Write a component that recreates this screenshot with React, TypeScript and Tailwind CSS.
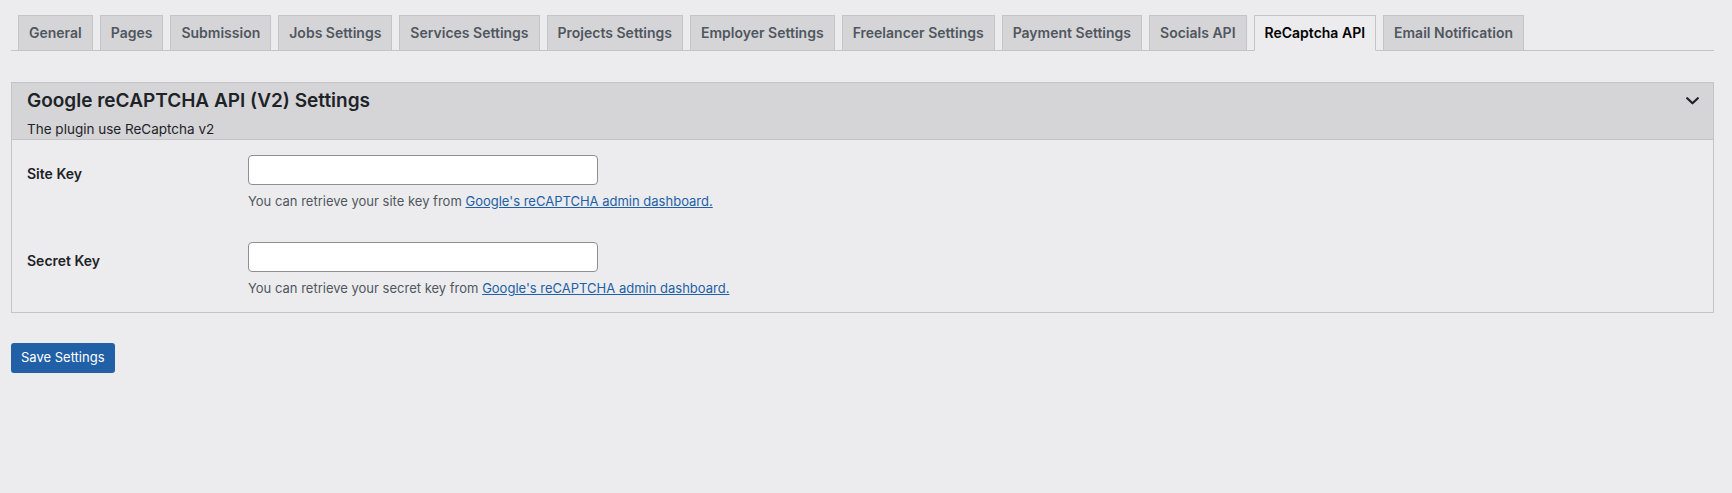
const tabs = [
  "General",
  "Pages",
  "Submission",
  "Jobs Settings",
  "Services Settings",
  "Projects Settings",
  "Employer Settings",
  "Freelancer Settings",
  "Payment Settings",
  "Socials API",
  "ReCaptcha API",
  "Email Notification",
];

const active = "ReCaptcha API";

function KeyRow({ label, what, last }: { label: string; what: string; last?: boolean }) {
  return (
    <div className={`flex ${last ? "pb-[14px]" : "pb-[16px]"}`}>
      <div className="w-[221px] shrink-0 pt-[24px] text-[14px] leading-[20px] font-semibold text-[#1d2327]">
        {label}
      </div>
      <div className="pt-[15px]">
        <input
          type="text"
          className="block w-[350px] h-[30px] rounded-[4px] border border-[#8c8f94] bg-white px-2 text-[14px] outline-none"
        />
        <p className="mt-[6px] text-[13px] leading-[20px] text-[#50575e]">
          You can retrieve your {what} key from{" "}
          <a href="#" className="text-[#2160a6] underline">
            Google's reCAPTCHA admin dashboard.
          </a>
        </p>
      </div>
    </div>
  );
}

export default function App() {
  return (
    <div className="min-h-screen bg-[#ececee] pl-[11px] pr-[18px] pt-[15px] font-['Inter',sans-serif]">
      <nav className="flex border-b border-[#c3c4c7]">
        {tabs.map((t) => (
          <a
            key={t}
            href="#"
            className={`ml-[7px] -mb-px border border-[#c3c4c7] px-[10px] py-[5px] text-[14px] leading-[24px] font-semibold whitespace-nowrap ${
              t === active
                ? "bg-[#ececee] border-b-[#ececee] text-black"
                : "bg-[#d5d5d8] text-[#50575e]"
            }`}
          >
            {t}
          </a>
        ))}
      </nav>

      <div className="mt-[31px] border border-[#c3c4c7]">
        <div className="bg-[#d5d5d8] border-b border-[#c3c4c7] pl-[15px] pr-[14px] pt-[6px]">
          <div className="flex items-center justify-between">
            <h2 className="text-[19px] leading-[24px] font-semibold text-[#1d2327]">
              Google reCAPTCHA API (V2) Settings
            </h2>
            <svg width="13" height="8" viewBox="0 0 13 8" fill="none">
              <polyline
                points="1.2,1.2 6.5,6.3 11.8,1.2"
                stroke="#1d2327"
                strokeWidth="2.2"
                strokeLinecap="round"
                strokeLinejoin="round"
              />
            </svg>
          </div>
          <p className="mt-[7px] text-[13.5px] leading-[19px] text-[#1d2327]">
            The plugin use ReCaptcha v2
          </p>
        </div>
        <div className="px-[15px]">
          <KeyRow label="Site Key" what="site" />
          <KeyRow label="Secret Key" what="secret" last />
        </div>
      </div>

      <button className="mt-[30px] h-[30px] rounded-[3px] bg-[#2160a6] px-[10px] text-[13px] text-white">
        Save Settings
      </button>
    </div>
  );
}
